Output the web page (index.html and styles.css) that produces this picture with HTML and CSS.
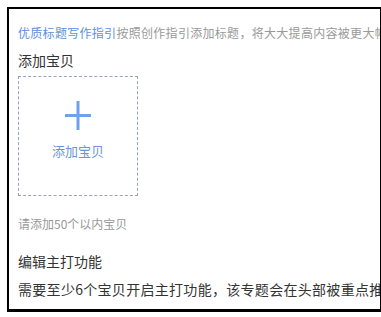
FILE: index.html
```html
<!DOCTYPE html>
<html lang="zh-CN">
<head>
  <meta charset="UTF-8">
  <title>添加宝贝</title>
  <link rel="stylesheet" href="styles.css">
</head>
<body>
  <div class="frame">
    <p class="guide"><a href="#" class="guide-link">优质标题写作指引</a>按照创作指引添加标题，将大大提高内容被更大幅度推荐的机会</p>
    <h2 class="label">添加宝贝</h2>
    <div class="uploader">
      <svg class="plus" width="30" height="30" viewBox="0 0 30 30">
        <rect x="13.5" y="1" width="3" height="29" fill="#6fa2ee"/>
        <rect x="2" y="14" width="26" height="3" fill="#6fa2ee"/>
      </svg>
      <span class="uploader-text">添加宝贝</span>
    </div>
    <p class="hint">请添加50个以内宝贝</p>
    <h2 class="label section">编辑主打功能</h2>
    <p class="desc">需要至少6个宝贝开启主打功能，该专题会在头部被重点推荐展示</p>
  </div>
</body>
</html>
```

FILE: styles.css
```css
body {
  margin: 0;
  padding: 7px 0 0 7px;
  background: #fff;
  font-family: "Noto Sans CJK SC", "Microsoft YaHei", sans-serif;
}

.frame {
  width: 362px;
  height: 286px;
  border: 2px solid #000;
  border-bottom-width: 3px;
  padding: 14px 0 0 9px;
  overflow: hidden;
  white-space: nowrap;
  box-shadow: 2px 2px 3px rgba(0, 0, 0, 0.25);
}

p, h2 {
  margin: 0;
}

.guide {
  font-size: 12px;
  line-height: 20px;
  letter-spacing: 0.3px;
  color: #999;
}

.guide-link {
  color: #5d8fe0;
  text-decoration: none;
}

.label {
  margin-top: 7px;
  font-size: 14px;
  font-weight: normal;
  line-height: 20px;
  color: #333;
}

.uploader {
  margin-top: 6px;
  width: 118px;
  height: 118px;
  border: 1px dashed #96a4bd;
  display: flex;
  flex-direction: column;
  align-items: center;
  justify-content: center;
}

.plus {
  margin-top: -12px;
}

.uploader-text {
  margin-top: 12px;
  font-size: 13px;
  line-height: 18px;
  color: #6b95d8;
}

.hint {
  margin-top: 18px;
  font-size: 12px;
  line-height: 20px;
  color: #999;
}

.section {
  margin-top: 17px;
}

.desc {
  margin-top: 8px;
  font-size: 14px;
  line-height: 20px;
  letter-spacing: 0.3px;
  color: #333;
}
```
